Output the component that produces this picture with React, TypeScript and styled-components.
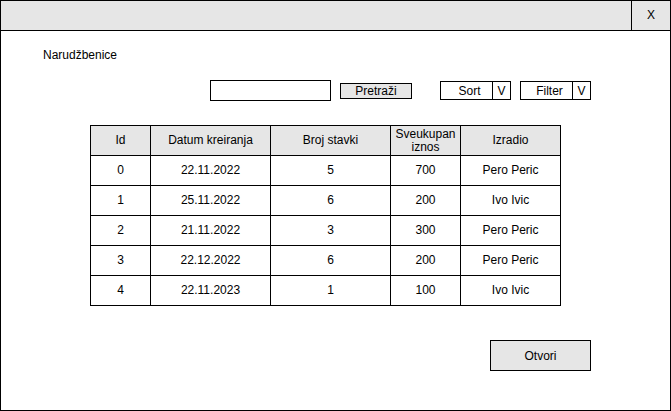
import React from "react";
import styled, { createGlobalStyle } from "styled-components";

const Global = createGlobalStyle`
  html, body { margin: 0; padding: 0; background: #fff; }
  body { font-family: "Liberation Sans", Arial, sans-serif; font-size: 12px; color: #000; }
  * { box-sizing: border-box; }
`;

const Window = styled.div`
  width: 671px;
  height: 411px;
  border: 1px solid #000;
  display: flex;
  flex-direction: column;
  background: #fff;
`;

const TitleBar = styled.div`
  height: 30px;
  display: flex;
  background: #e6e6e6;
  border-bottom: 1px solid #000;
`;

const TitleSpacer = styled.div`
  flex: 1;
`;

const CloseCell = styled.div`
  width: 39px;
  border-left: 1px solid #000;
  display: flex;
  align-items: center;
  justify-content: center;
  font-size: 12px;
  padding-bottom: 2px;
`;

const Content = styled.div`
  flex: 1;
  display: flex;
  flex-direction: column;
  padding: 17px 0 0 42px;
`;

const Heading = styled.div`
  line-height: 14px;
  height: 14px;
`;

const Toolbar = styled.div`
  margin-top: 18px;
  margin-left: 167px;
  height: 21px;
  display: flex;
  align-items: center;
`;

const SearchInput = styled.div`
  width: 121px;
  height: 21px;
  border: 1px solid #000;
  background: #fff;
`;

const SearchButton = styled.div`
  margin-left: 9px;
  width: 72px;
  height: 16px;
  border: 1px solid #000;
  background: #e6e6e6;
  display: flex;
  align-items: center;
  justify-content: center;
  line-height: 14px;
`;

const Dropdown = styled.div<{ $gap: number }>`
  margin-left: ${(p) => p.$gap}px;
  width: 71px;
  height: 19px;
  border: 1px solid #000;
  display: flex;
  background: #fff;
`;

const DropLabel = styled.div`
  flex: 1;
  display: flex;
  align-items: center;
  justify-content: center;
  padding-left: 6px;
  border-right: 1px solid #000;
`;

const DropArrow = styled.div`
  width: 17px;
  display: flex;
  align-items: center;
  justify-content: center;
`;

const Grid = styled.div`
  margin-top: 24px;
  margin-left: 47px;
  width: 471px;
  display: grid;
  grid-template-columns: 60px 120px 120px 70px 100px;
  grid-auto-rows: 30px;
  border-left: 1px solid #000;
  border-top: 1px solid #000;
`;

const Cell = styled.div<{ $head?: boolean }>`
  border-right: 1px solid #000;
  border-bottom: 1px solid #000;
  background: ${(p) => (p.$head ? "#e6e6e6" : "#fff")};
  display: flex;
  align-items: center;
  justify-content: center;
  text-align: center;
  line-height: 13px;
`;

const Footer = styled.div`
  margin-top: 34px;
  margin-left: 447px;
`;

const OpenButton = styled.div`
  width: 101px;
  height: 31px;
  border: 1px solid #000;
  background: #e6e6e6;
  display: flex;
  align-items: center;
  justify-content: center;
`;

const headers = ["Id", "Datum kreiranja", "Broj stavki", "Sveukupan iznos", "Izradio"];
const rows = [
  ["0", "22.11.2022", "5", "700", "Pero Peric"],
  ["1", "25.11.2022", "6", "200", "Ivo Ivic"],
  ["2", "21.11.2022", "3", "300", "Pero Peric"],
  ["3", "22.12.2022", "6", "200", "Pero Peric"],
  ["4", "22.11.2023", "1", "100", "Ivo Ivic"],
];

export default function App() {
  return (
    <>
      <Global />
      <Window>
        <TitleBar>
          <TitleSpacer />
          <CloseCell>X</CloseCell>
        </TitleBar>
        <Content>
          <Heading>Narudžbenice</Heading>
          <Toolbar>
            <SearchInput />
            <SearchButton>Pretraži</SearchButton>
            <Dropdown $gap={28}>
              <DropLabel>Sort</DropLabel>
              <DropArrow>V</DropArrow>
            </Dropdown>
            <Dropdown $gap={9}>
              <DropLabel>Filter</DropLabel>
              <DropArrow>V</DropArrow>
            </Dropdown>
          </Toolbar>
          <Grid>
            {headers.map((h) => (
              <Cell $head key={h}>
                {h === "Sveukupan iznos" ? (
                  <span>
                    Sveukupan
                    <br />
                    iznos
                  </span>
                ) : (
                  h
                )}
              </Cell>
            ))}
            {rows.map((r, i) =>
              r.map((c, j) => <Cell key={`${i}-${j}`}>{c}</Cell>)
            )}
          </Grid>
          <Footer>
            <OpenButton>Otvori</OpenButton>
          </Footer>
        </Content>
      </Window>
    </>
  );
}
